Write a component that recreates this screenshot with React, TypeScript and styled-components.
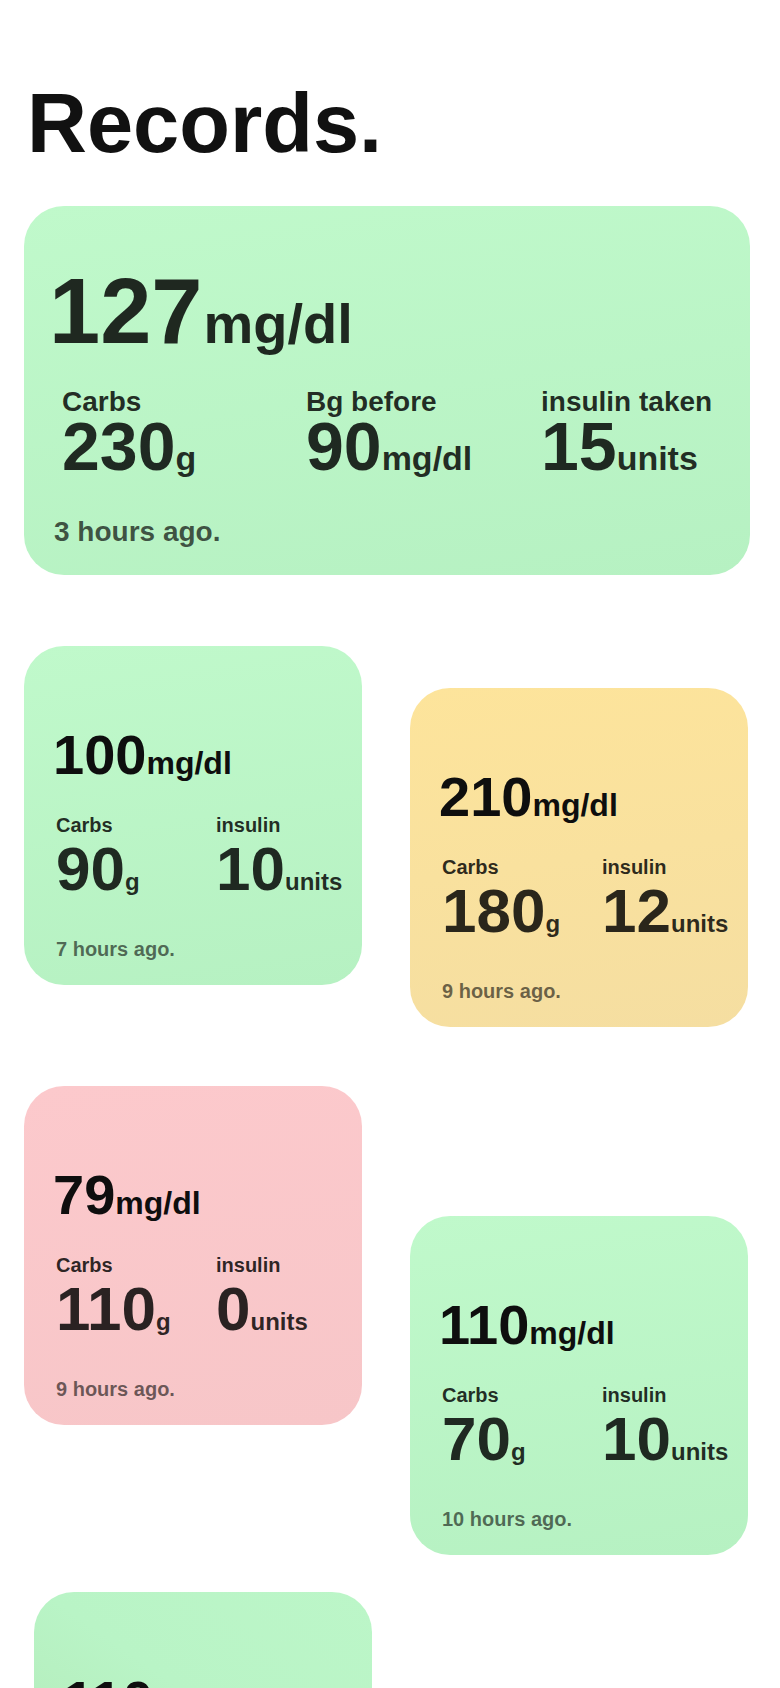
import React from 'react';
import styled, { createGlobalStyle, css } from 'styled-components';

const GlobalStyle = createGlobalStyle`
  html, body { margin: 0; padding: 0; background: #ffffff; }
  body {
    font-family: "Liberation Sans", Arial, Helvetica, sans-serif;
    -webkit-font-smoothing: antialiased;
  }
`;

type Tone = 'green' | 'yellow' | 'red' | 'fresh';

const tones: Record<Tone, string> = {
  green: 'linear-gradient(172deg, #c0f9cb 0%, #b6f1c2 100%)',
  yellow: 'linear-gradient(172deg, #fde49b 0%, #f5dea1 100%)',
  red: 'linear-gradient(172deg, #fcc9cc 0%, #f7c6c8 100%)',
  fresh: 'linear-gradient(35deg, #afe5b1 0%, #b9f4c6 60%, #bcf6c8 100%)',
};

const Page = styled.main`
  width: 780px;
  box-sizing: border-box;
  padding: 82px 30px 0 24px;
`;

const Title = styled.h1`
  margin: 0;
  padding-left: 3px;
  font-size: 83px;
  line-height: 1;
  font-weight: 700;
  color: #111111;
`;

const Card = styled.article<{ $tone: Tone; $big?: boolean; $dy?: number; $dx?: number }>`
  box-sizing: border-box;
  display: flex;
  flex-direction: column;
  border-radius: 40px;
  background: ${(p) => tones[p.$tone]};
  color: rgba(0, 0, 0, 0.83);
  ${(p) =>
    p.$big
      ? css`
          width: 726px;
          height: 369px;
          margin-top: 41px;
          padding-top: 59px;
        `
      : css`
          width: 338px;
          height: 339px;
          padding-top: 81px;
        `}
  margin-top: ${(p) => (p.$dy !== undefined ? `${p.$dy}px` : undefined)};
  margin-left: ${(p) => (p.$dx ? `${p.$dx}px` : '0')};
`;

const Reading = styled.div<{ $big?: boolean }>`
  display: flex;
  align-items: baseline;
  line-height: 1;
  font-weight: 700;
  padding-left: ${(p) => (p.$big ? 25 : 29)}px;
  color: ${(p) => (p.$big ? 'rgba(0,0,0,0.84)' : '#0e0e0e')};
`;

const ReadingValue = styled.span<{ $big?: boolean }>`
  font-size: ${(p) => (p.$big ? 92 : 56)}px;
`;

const ReadingUnit = styled.span<{ $big?: boolean }>`
  font-size: ${(p) => (p.$big ? 56 : 32)}px;
  margin-left: ${(p) => (p.$big ? 1 : 0)}px;
`;

const Stats = styled.div<{ $big?: boolean }>`
  display: grid;
  grid-template-columns: ${(p) => (p.$big ? '244px 235px auto' : '160px auto')};
  margin-top: ${(p) => (p.$big ? 31 : 32)}px;
  padding-left: ${(p) => (p.$big ? 38 : 32)}px;
`;

const Stat = styled.div`
  display: flex;
  flex-direction: column;
`;

const StatLabel = styled.span<{ $big?: boolean }>`
  font-size: ${(p) => (p.$big ? 28 : 20)}px;
  line-height: 1;
  font-weight: 700;
`;

const StatValueRow = styled.div<{ $big?: boolean }>`
  display: flex;
  align-items: baseline;
  line-height: 1;
  font-weight: 700;
  margin-top: ${(p) => (p.$big ? -4 : 3)}px;
`;

const StatNumber = styled.span<{ $big?: boolean }>`
  font-size: ${(p) => (p.$big ? 68 : 62)}px;
`;

const StatUnit = styled.span<{ $big?: boolean }>`
  font-size: ${(p) => (p.$big ? 34 : 24)}px;
`;

const Ago = styled.p<{ $big?: boolean }>`
  margin: ${(p) => (p.$big ? 38 : 39)}px 0 0;
  padding-left: ${(p) => (p.$big ? 30 : 32)}px;
  font-size: ${(p) => (p.$big ? 28 : 20)}px;
  line-height: 1;
  font-weight: 700;
  color: ${(p) => (p.$big ? 'rgba(0,0,0,0.68)' : 'rgba(0,0,0,0.58)')};
`;

const Grid = styled.section`
  display: grid;
  grid-template-columns: 338px 338px;
  column-gap: 48px;
  align-items: start;
  margin-top: 71px;
`;

type StatItem = { label: string; value: string; unit: string };

type Entry = {
  tone: Tone;
  reading: string;
  stats: StatItem[];
  ago: string;
  dy: number;
  dx?: number;
};

const records: Entry[] = [
  {
    tone: 'green',
    reading: '100',
    stats: [
      { label: 'Carbs', value: '90', unit: 'g' },
      { label: 'insulin', value: '10', unit: 'units' },
    ],
    ago: '7 hours ago.',
    dy: 0,
  },
  {
    tone: 'yellow',
    reading: '210',
    stats: [
      { label: 'Carbs', value: '180', unit: 'g' },
      { label: 'insulin', value: '12', unit: 'units' },
    ],
    ago: '9 hours ago.',
    dy: 42,
  },
  {
    tone: 'red',
    reading: '79',
    stats: [
      { label: 'Carbs', value: '110', unit: 'g' },
      { label: 'insulin', value: '0', unit: 'units' },
    ],
    ago: '9 hours ago.',
    dy: 59,
  },
  {
    tone: 'green',
    reading: '110',
    stats: [
      { label: 'Carbs', value: '70', unit: 'g' },
      { label: 'insulin', value: '10', unit: 'units' },
    ],
    ago: '10 hours ago.',
    dy: 189,
  },
  {
    tone: 'fresh',
    reading: '110',
    stats: [
      { label: 'Carbs', value: '60', unit: 'g' },
      { label: 'insulin', value: '8', unit: 'units' },
    ],
    ago: '12 hours ago.',
    dy: 37,
    dx: 10,
  },
];

const heroStats: StatItem[] = [
  { label: 'Carbs', value: '230', unit: 'g' },
  { label: 'Bg before', value: '90', unit: 'mg/dl' },
  { label: 'insulin taken', value: '15', unit: 'units' },
];

function StatBlock({ item, big }: { item: StatItem; big?: boolean }) {
  return (
    <Stat>
      <StatLabel $big={big}>{item.label}</StatLabel>
      <StatValueRow $big={big}>
        <StatNumber $big={big}>{item.value}</StatNumber>
        <StatUnit $big={big}>{item.unit}</StatUnit>
      </StatValueRow>
    </Stat>
  );
}

export default function App() {
  return (
    <>
      <GlobalStyle />
      <Page>
        <Title>Records.</Title>
        <Card $tone="green" $big>
          <Reading $big>
            <ReadingValue $big>127</ReadingValue>
            <ReadingUnit $big>mg/dl</ReadingUnit>
          </Reading>
          <Stats $big>
            {heroStats.map((s) => (
              <StatBlock key={s.label} item={s} big />
            ))}
          </Stats>
          <Ago $big>3 hours ago.</Ago>
        </Card>
        <Grid>
          {records.map((r, i) => (
            <Card key={i} $tone={r.tone} $dy={r.dy} $dx={r.dx}>
              <Reading>
                <ReadingValue>{r.reading}</ReadingValue>
                <ReadingUnit>mg/dl</ReadingUnit>
              </Reading>
              <Stats>
                {r.stats.map((s) => (
                  <StatBlock key={s.label} item={s} />
                ))}
              </Stats>
              <Ago>{r.ago}</Ago>
            </Card>
          ))}
        </Grid>
      </Page>
    </>
  );
}
